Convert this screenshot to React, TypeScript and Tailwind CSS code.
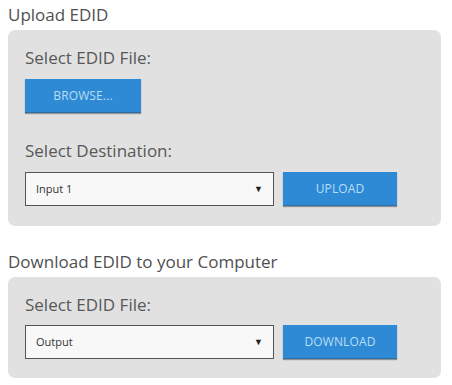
import React from "react";

const font = { fontFamily: '"Open Sans", "Segoe UI", "Liberation Sans", sans-serif' };

function Btn({ label, w }: { label: string; w: string }) {
  return (
    <button
      className={`${w} h-[34px] bg-[#2e8ad4] text-[#b9def5] text-[12px] tracking-[0.01em] shadow-[0_1px_1px_rgba(0,0,0,0.35)] border-b border-[#2a6fa8]`}
    >
      {label}
    </button>
  );
}

function Select({ value }: { value: string }) {
  return (
    <div className="w-[249px] h-[34px] bg-[#f8f8f8] border border-[#555] flex items-center justify-between pl-[10px] pr-[10px]">
      <span className="text-[11px] text-[#333]">{value}</span>
      <span className="text-[9px] text-[#222]">▼</span>
    </div>
  );
}

export default function App() {
  return (
    <div className="w-[452px] h-[385px] bg-white pl-[8px] pt-[3px]" style={font}>
      <div className="text-[17px] text-[#505050] leading-[24px]">Upload EDID</div>
      <div className="mt-[3px] w-[433px] h-[196px] bg-[#e1e1e1] rounded-[7px] pl-[17px] pt-[16px]">
        <div className="text-[17px] text-[#585858] leading-[24px]">Select EDID File:</div>
        <div className="mt-[9px]">
          <Btn label="BROWSE..." w="w-[116px]" />
        </div>
        <div className="mt-[26px] text-[17px] text-[#585858] leading-[24px]">Select Destination:</div>
        <div className="mt-[9px] flex gap-[9px]">
          <Select value="Input 1" />
          <Btn label="UPLOAD" w="w-[114px]" />
        </div>
      </div>
      <div className="mt-[24px] text-[17px] text-[#505050] leading-[24px]">Download EDID to your Computer</div>
      <div className="mt-[3px] w-[433px] h-[101px] bg-[#e1e1e1] rounded-[7px] pl-[17px] pt-[16px]">
        <div className="text-[17px] text-[#585858] leading-[24px]">Select EDID File:</div>
        <div className="mt-[8px] flex gap-[9px]">
          <Select value="Output" />
          <Btn label="DOWNLOAD" w="w-[114px]" />
        </div>
      </div>
    </div>
  );
}
